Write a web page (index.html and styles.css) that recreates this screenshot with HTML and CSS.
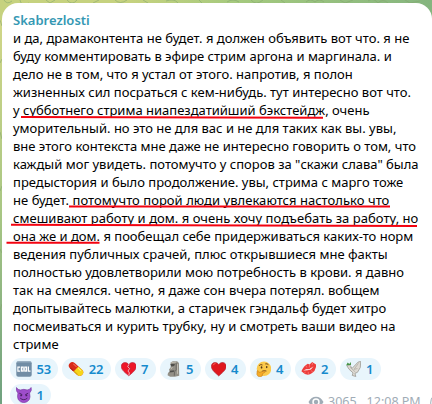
FILE: index.html
```html
<!DOCTYPE html>
<html lang="ru">
<head>
<meta charset="utf-8">
<title>Skabrezlosti</title>
<link rel="stylesheet" href="styles.css">
</head>
<body>
<svg class="wallpaper" width="432" height="404" viewBox="0 0 432 404" fill="none" aria-hidden="true">
  <path d="M4 0q3 5 8 1M20 0q1 7 9 3M46 0l4 3 5-3M67 0q5 6 10 0M93 3l6-3M115 0q5 5 12 0M143 0l5 3M166 1q8-3 12 2M199 0l3 3M227 2q6-4 12 0M251 0q5 6 12 0M281 0l4 3M306 2q4-4 9 0q4-4 9 0M340 0l5 3 8-3M368 1q5-4 10 2q5-5 10 0M405 0l5 3 10-2M0 20l2 6M0 63l2-4M0 132l2 7M0 191l2-5M0 249l2 4M0 310l2-6M0 360l2 5"/>
</svg>
<main class="bubble">
  <h1 class="author">Skabrezlosti</h1>
  <div class="message">
    <p>и да, драмаконтента не будет. я должен объявить вот что. я не</p>
    <p>буду комментировать в эфире стрим аргона и маргинала. и</p>
    <p>дело не в том, что я устал от этого. напротив, я полон</p>
    <p>жизненных сил посраться с кем-нибудь. тут интересно вот что.</p>
    <p>у субботнего стрима ниапездатийший бэкстейдж, очень</p>
    <p>уморительный. но это не для вас и не для таких как вы. увы,</p>
    <p>вне этого контекста мне даже не интересно говорить о том, что</p>
    <p>каждый мог увидеть. потомучто у споров за "скажи слава" была</p>
    <p>предыстория и было продолжение. увы, стрима с марго тоже</p>
    <p class="loose">не будет. потомучто порой люди увлекаются настолько что</p>
    <p class="loose">смешивают работу и дом. я очень хочу подъебать за работу, но</p>
    <p>она же и дом. я пообещал себе придерживаться каких-то норм</p>
    <p>ведения публичных срачей, плюс открывшиеся мне факты</p>
    <p>полностью удовлетворили мою потребность в крови. я давно</p>
    <p>так на смеялся. четно, я даже сон вчера потерял. вобщем</p>
    <p>допытывайтесь малютки, а старичек гэндальф будет хитро</p>
    <p>посмеиваться и курить трубку, ну и смотреть ваши видео на</p>
    <p>стриме</p>
  </div>
  <div class="reactions">
    <span class="chip"><svg viewBox="0 0 16 16"><rect x=".3" y=".3" width="15.4" height="15.4" rx="2" fill="#718da5"/><path d="M1 .9h14" stroke="#a2b5c5"/><g fill="none" stroke="#fff" stroke-width="1.2"><path d="M4.100 6.100H1.900v4h2.200"/><rect x="5.400" y="6.100" width="1.800" height="4"/><rect x="8.800" y="6.100" width="1.800" height="4"/><path d="M12.400 5.500v4.600h2.100"/></g></svg>53</span>
    <span class="chip"><svg viewBox="0 0 16 16"><g transform="rotate(43 8 8)"><rect x="-.5" y="4.500" width="17" height="7" rx="3.500" fill="#d92b19"/><path d="M8 4.500h5a3.500 3.500 0 0 1 0 7H8z" fill="#f6d51b"/><path d="M2.500 6H7" stroke="#f16a52"/><path d="M9 6h4" stroke="#fff176"/><path d="M3 11h4" stroke="#ac1d17"/><path d="M8 11h5" stroke="#d7a713"/></g></svg>22</span>
    <span class="chip"><svg viewBox="0 0 16 16"><path d="M8 15C5.300 12.500.3 9.400.3 5.300.3 1 5.800-.1 8 3.600 10.200-.1 15.700 1 15.700 5.300 15.700 9.400 10.700 12.500 8 15z" fill="#ed1628" stroke="#b4233c" stroke-width=".7"/><path d="M8 3.400L7 5.600l1.900 2-1.700 2.500L8.600 12 8 14.500" fill="none" stroke="#f8c9d3" stroke-width=".9"/><path d="M8.700 4L7.900 5.400l1.900 2.200-1.700 2.500" fill="none" stroke="#8e3044" stroke-width=".5"/></svg>7</span>
    <span class="chip"><svg viewBox="0 0 16 16"><path d="M4.700 1.200L7 0h4.500l1.800 1.900.3 13-4.500 1.100H4.300l-2.700-1.600.5-2.500 1.800-1.200-.8-2.200 1.700-2.300z" fill="#939087"/><path d="M4.500 2.800h4.700l-.8 2.100-3 .5zM4 9.900l4.800-.6-1 1.800-4.300.5z" fill="#504f4b"/><path d="M10.500 2v7l-1.800 2-.2 4" fill="none" stroke="#686660"/><path d="M5.400 1.400l5-.5M6.600 6L5 8.200M11.800 3v10" stroke="#c2beb2"/></svg>5</span>
    <span class="chip"><svg viewBox="0 0 16 16"><path d="M8 15.200C5.300 12.500.4 9.400.4 5.200.4.900 5.800-.1 8 3.500 10.200-.1 15.600.9 15.600 5.200 15.600 9.400 10.700 12.500 8 15.200z" fill="#df171e" stroke="#ac2636" stroke-width=".7"/><path d="M2.200 4.200q.6-1.800 2.500-1.900" fill="none" stroke="#fb5b50"/></svg>4</span>
    <span class="chip"><svg viewBox="0 0 16 16"><circle cx="8.200" cy="7.800" r="7.500" fill="#fbc94a"/><path d="M3.200 4.500q1.800-1.800 3.500-.6M9.500 2.800q2-.7 3.300.8M6 10.400q2.500-1.200 4.700-.3" fill="none" stroke="#744719"/><ellipse cx="5.700" cy="6.400" rx=".8" ry="1.200" fill="#513517"/><ellipse cx="11" cy="6" rx=".8" ry="1.200" fill="#513517"/><path d="M1.200 10q.8-.9 1.500.4l.5 1.200 5-1.400q1.800-.1.9 1.300L6.700 12.800q.6 3-2.400 3.200-2.900.1-3.400-2.500z" fill="#f5ab27" stroke="#c67d1d" stroke-width=".6"/></svg>4</span>
    <span class="chip"><svg viewBox="0 0 16 16"><path d="M.4 10.400Q3 4.500 7 2.600l1.800.8L11.500.8l4.200 2.800q-.3 5.800-4.300 8.600Q6.300 16.500.4 10.400z" fill="#ed3c3b"/><path d="M2.200 9.500l3.200-1.300 3 .1 4.500-3.200-2.800 3.300-3.300.8z" fill="#fff"/><path d="M5 4.500l1 2M8.800 3.400l-.3 3M12 1.700L11.400 4M4.300 10.800l-.5 1.800M7.500 10.900v2.800M10.700 9.500l1.200 1.800" stroke="#fb9690" stroke-width=".6"/></svg>2</span>
    <span class="chip"><svg viewBox="0 0 16 16"><path d="M4.200 4.200l2 3.200L12.400.9l2.700-.7-.4 6.200-2.900 5-2.600 1.100.9 3.200-3.700-1.100.8-2.600-4.100-3.800L1 4.800l2.400-.9z" fill="#ddd9d2" stroke="#9a9993" stroke-width=".8"/><path d="M12.800 2.200L8.300 8.400l3.500-.9M4 6l5.500 5" fill="none" stroke="#aaa8a1" stroke-width=".7"/><path d="M0 4.300l1.800-3 1.500 1.500L5 .8l.1 3-2.600.2z" fill="#449243"/></svg>1</span>
    <span class="chip"><svg viewBox="0 0 16 16"><path d="M2 6Q-.7 3.400.5.3q1.400 2.600 4.100 2.500 3.400-1.200 6.800 0Q14.100 2.900 15.500.3q1.200 3.100-1.500 5.700 2.200 8.800-6 10Q-.2 14.800 2 6z" fill="#9e4dcb" stroke="#74369c" stroke-width=".6"/><path d="M3.500 6.200l3 1.500M12.500 6.200l-3 1.500M4.300 11.200q3.700 3.300 7.400 0" fill="none" stroke="#4b2364"/><circle cx="5.300" cy="8.400" r="1" fill="#4b2364"/><circle cx="10.700" cy="8.400" r="1" fill="#4b2364"/></svg>1</span>
  </div>
  <footer class="meta"><svg viewBox="0 0 16 12"><path d="M.5 6Q3.300.8 8 .8T15.500 6Q12.700 11.200 8 11.200T.5 6z" fill="#a0acb6"/><circle cx="8" cy="6" r="3.700" fill="#fff"/><circle cx="8" cy="6" r="2.200" fill="#a0acb6"/></svg><span class="views">3065</span><time>12:08 PM</time><svg class="forward" viewBox="0 0 16 12"><path d="M3 .5Q.7 2.500.7 7t3 5" fill="none" stroke="#a0acb6"/></svg></footer>
</main>
<svg class="marks" width="432" height="404" viewBox="0 0 432 404" fill="none" aria-hidden="true">
  <path d="M21 117L323 117.800M69 206.500H390M11 224.800L417 226M6.500 242.800H99.500"/>
</svg>
</body>
</html>
```
FILE: styles.css
```css
* { box-sizing: border-box; }
body {
  position: relative;
  width: 432px;
  height: 404px;
  margin: 0;
  padding: 3px 0 0 2px;
  overflow: hidden;
  background: linear-gradient(90deg, #c6d27f 130px, #a4c97e 240px, #85b57f 432px) 0 0 / 100% 20px no-repeat, linear-gradient(#d5d888, #a9c784 210px, #6fa17f 404px);
  font-family: "Noto Sans", "Open Sans", sans-serif;
  font-size: 13px;
  color: #000;
}
.wallpaper, .marks { position: absolute; left: 0; top: 0; }
.wallpaper { stroke: #83a56e; stroke-opacity: .55; }
.marks { stroke: #f30310; stroke-width: 2; }
.bubble {
  position: relative;
  width: 430px;
  height: 420px;
  padding: 8px 0 0 11px;
  border-radius: 16px 16px 0 0;
  background: #fff;
}
.author {
  margin: 0;
  height: 18px;
  font-size: 13px;
  line-height: 18px;
  font-weight: 600;
  color: #3598b3;
}
.message { height: 325px; }
.message p { margin: 0; line-height: 18px; white-space: nowrap; }
.message .loose { letter-spacing: .035px; }
.reactions {
  display: flex;
  flex-wrap: wrap;
  gap: 4px;
  width: 375px;
  margin: 4px 0 0 -3px;
}
.chip {
  display: flex;
  align-items: center;
  gap: 4.4px;
  height: 22px;
  padding: 0 7px 0 6px;
  border-radius: 11px;
  background: #e8f5fc;
  color: #168acd;
  font-weight: 600;
  line-height: 22px;
}
.chip:nth-child(n+3) { width: 41px; gap: 5px; }
.chip svg { width: 16px; height: 16px; }
.meta {
  display: flex;
  align-items: center;
  height: 18px;
  margin: -13px 0 0 295px;
  color: #a0acb6;
  font-size: 12.5px;
  line-height: 18px;
  white-space: nowrap;
}
.meta svg { flex: none; width: 16px; height: 12px; margin-right: 4px; }
.meta .forward { margin: 0 0 0 9px; }
.views { margin-right: 10px; }
```
